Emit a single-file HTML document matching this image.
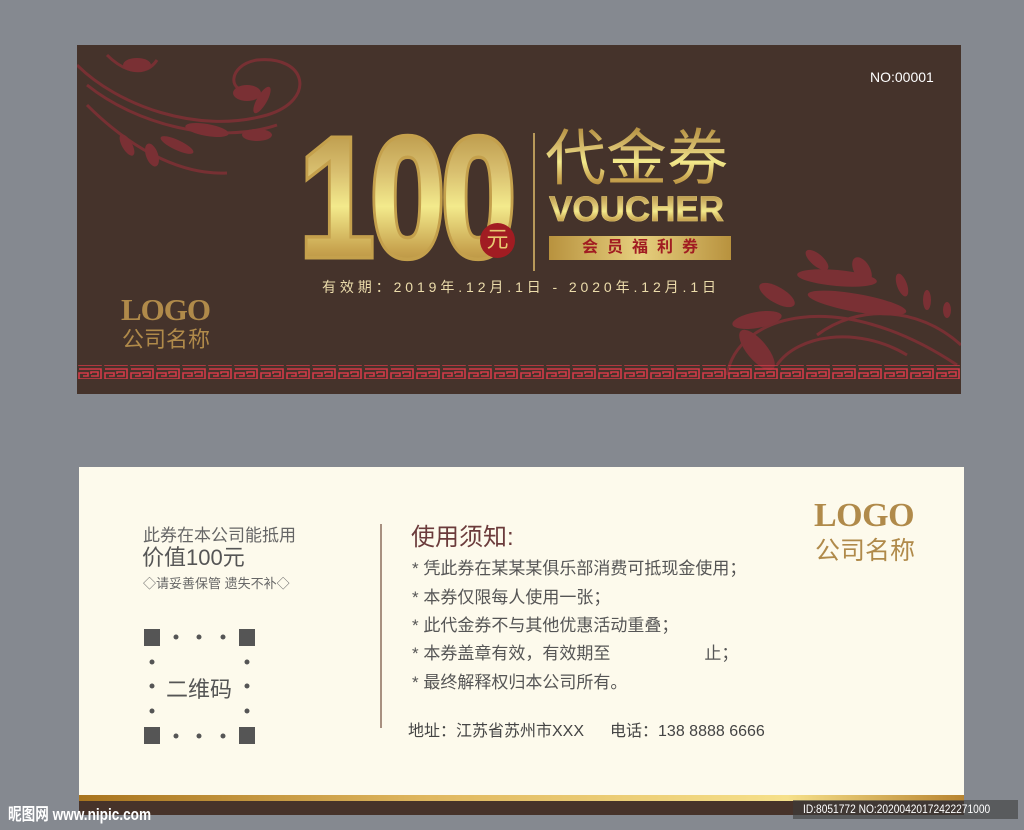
<!DOCTYPE html>
<html><head><meta charset="utf-8"><style>
*{margin:0;padding:0;box-sizing:border-box}
body{width:1024px;height:830px;overflow:hidden;background:#858990;position:relative;font-family:"Liberation Sans","Noto Sans CJK SC",sans-serif}
.abs{position:absolute;white-space:nowrap}
.top{position:absolute;left:77px;top:45px;width:884px;height:349px;background:#45332b;overflow:hidden}
.gold{background:linear-gradient(180deg,#b08a3c 0%,#d9c070 35%,#f3ea8c 55%,#c9a550 80%,#a27a32 100%);-webkit-background-clip:text;background-clip:text;color:transparent}
.bot{position:absolute;left:79px;top:467px;width:885px;height:348px;background:#fdfaec}
.n{font-size:17px;color:#555}
</style></head><body>
<div class="top">
<svg class="abs" style="left:0;top:0" width="884" height="349">
<defs><pattern id="fr" x="0" y="0" width="26" height="14" patternUnits="userSpaceOnUse">
<path d="M2 2H24V12H2V6H11V9H6M14 9H21V5H14V7" fill="none" stroke="#d23a48" stroke-width="1.6"/>
</pattern></defs>
<g fill="none" stroke="#7a3034" stroke-width="3" opacity=".95">
<path d="M0 20C40 60 120 90 190 70C240 55 230 10 180 15C150 20 150 50 175 45"/>
<path d="M10 40C60 80 140 100 200 80"/>
<path d="M30 10C50 30 70 30 80 15"/>
<path d="M10 60C60 110 110 130 150 128"/>
<path d="M650 330C660 270 760 240 880 320"/>
<path d="M700 320C720 290 780 280 830 310"/>
<path d="M740 290C780 260 840 260 884 300"/>
</g>
<g fill="#7a3034">
<ellipse cx="170" cy="48" rx="14" ry="8"/><ellipse cx="60" cy="20" rx="14" ry="7"/>
<ellipse cx="130" cy="85" rx="22" ry="6" transform="rotate(10 130 85)"/>
<ellipse cx="100" cy="100" rx="18" ry="5" transform="rotate(25 100 100)"/>
<ellipse cx="75" cy="110" rx="6" ry="12" transform="rotate(-20 75 110)"/>
<ellipse cx="50" cy="100" rx="5" ry="12" transform="rotate(-30 50 100)"/>
<ellipse cx="180" cy="90" rx="15" ry="6"/><ellipse cx="185" cy="55" rx="5" ry="15" transform="rotate(30 185 55)"/>
<ellipse cx="760" cy="233" rx="40" ry="8" transform="rotate(5 760 233)"/>
<ellipse cx="780" cy="258" rx="50" ry="9" transform="rotate(10 780 258)"/>
<ellipse cx="700" cy="250" rx="20" ry="8" transform="rotate(30 700 250)"/>
<ellipse cx="680" cy="275" rx="25" ry="8" transform="rotate(-10 680 275)"/>
<ellipse cx="740" cy="215" rx="14" ry="6" transform="rotate(40 740 215)"/>
<ellipse cx="785" cy="225" rx="8" ry="14" transform="rotate(-30 785 225)"/>
<ellipse cx="825" cy="240" rx="5" ry="12" transform="rotate(-20 825 240)"/>
<ellipse cx="850" cy="255" rx="4" ry="10"/><ellipse cx="870" cy="265" rx="4" ry="8"/>
<ellipse cx="680" cy="305" rx="10" ry="25" transform="rotate(-40 680 305)"/>
</g>
<rect x="0" y="320" width="884" height="14" fill="url(#fr)"/>
</svg>
<div class="abs" style="left:793px;top:24px;font-size:14px;color:#fff">NO:00001</div>
<div class="abs" style="left:222px;top:68px;font-size:170px;font-weight:900;letter-spacing:-6px;transform:scaleX(0.8);transform-origin:left top;line-height:1;color:#c9a550;-webkit-text-stroke:7px #c4a04c">100</div>
<div class="abs gold" style="left:222px;top:68px;font-size:170px;font-weight:900;letter-spacing:-6px;transform:scaleX(0.8);transform-origin:left top;line-height:1">100</div>
<div class="abs" style="left:403px;top:178px;width:35px;height:35px;border-radius:50%;background:#a11c22;color:#e8c870;font-size:22px;text-align:center;line-height:34px">元</div>
<div class="abs" style="left:456px;top:88px;width:2px;height:138px;background:#b8995a"></div>
<div class="abs gold" style="left:468px;top:80px;font-size:61px;line-height:1.1">代金券</div>
<div class="abs gold" style="left:472px;top:147px;font-size:35px;font-weight:bold;line-height:1;-webkit-text-stroke:0.6px #d9c070">VOUCHER</div>
<div class="abs" style="left:472px;top:191px;width:182px;height:24px;background:linear-gradient(90deg,#b8923e,#e6cf7e,#b8923e);color:#a11c22;font-size:16px;font-weight:bold;text-align:center;line-height:24px;letter-spacing:9px;padding-left:9px">会员福利券</div>
<div class="abs" style="left:245px;top:232px;font-size:14px;color:#ecdcab;letter-spacing:3.9px">有效期：2019年.12月.1日 - 2020年.12月.1日</div>
<div class="abs" style="left:44px;top:247px;font-family:'Liberation Serif',serif;font-weight:bold;font-size:31px;color:#b08a4a;letter-spacing:-1px">LOGO</div>
<div class="abs" style="left:45px;top:277px;font-size:22px;color:#b08a4a">公司名称</div>
</div>

<div class="bot">
<div class="abs" style="left:64px;top:54px;font-size:17px;color:#666">此券在本公司能抵用</div>
<div class="abs" style="left:63px;top:73px;font-size:22px;color:#555">价值100元</div>
<div class="abs" style="left:64px;top:106px;font-size:13px;color:#666">◇请妥善保管 遗失不补◇</div>
<svg class="abs" style="left:60px;top:155px" width="125" height="130">
<g fill="#555"><rect x="5" y="7" width="16" height="17"/><rect x="100" y="7" width="16" height="17"/><rect x="5" y="105" width="16" height="17"/><rect x="100" y="105" width="16" height="17"/>
<circle cx="37" cy="15" r="2.5"/><circle cx="60" cy="15" r="2.5"/><circle cx="84" cy="15" r="2.5"/>
<circle cx="37" cy="114" r="2.5"/><circle cx="60" cy="114" r="2.5"/><circle cx="84" cy="114" r="2.5"/>
<circle cx="13" cy="40" r="2.5"/><circle cx="13" cy="64" r="2.5"/><circle cx="13" cy="89" r="2.5"/>
<circle cx="108" cy="40" r="2.5"/><circle cx="108" cy="64" r="2.5"/><circle cx="108" cy="89" r="2.5"/></g></svg>
<div class="abs" style="left:87px;top:205px;font-size:22px;color:#555">二维码</div>
<div class="abs" style="left:301px;top:57px;width:2px;height:204px;background:#a89080"></div>
<div class="abs" style="left:332px;top:50px;font-size:24px;color:#6b3b3b">使用须知:</div>
<div class="abs n" style="left:333px;top:87px">* 凭此券在某某某俱乐部消费可抵现金使用；</div>
<div class="abs n" style="left:333px;top:116px">* 本券仅限每人使用一张；</div>
<div class="abs n" style="left:333px;top:144px">* 此代金券不与其他优惠活动重叠；</div>
<div class="abs n" style="left:333px;top:172px">* 本券盖章有效，有效期至<span style="display:inline-block;width:94px"></span>止；</div>
<div class="abs n" style="left:333px;top:201px">* 最终解释权归本公司所有。</div>
<div class="abs" style="left:329px;top:250px;font-size:16px;color:#444">地址：江苏省苏州市XXX<span style="display:inline-block;width:26px"></span>电话：138 8888 6666</div>
<div class="abs" style="left:735px;top:30px;font-family:'Liberation Serif',serif;font-weight:bold;font-size:34px;color:#b08a4a;letter-spacing:-0.5px">LOGO</div>
<div class="abs" style="left:736px;top:64px;font-size:25px;color:#b08a4a">公司名称</div>
<div class="abs" style="left:0;top:328px;width:885px;height:6px;background:linear-gradient(90deg,#a8741e,#e0b860 40%,#f6e08a 80%,#b88430)"></div>
<div class="abs" style="left:0;top:334px;width:885px;height:14px;background:#47332a"></div>
</div>
<div class="abs" style="left:8px;top:800px;font-size:17px;font-weight:bold;color:#fff;transform:scaleX(.8);transform-origin:left">昵图网 www.nipic.com</div>
<div class="abs" style="left:793px;top:800px;width:225px;height:19px;background:rgba(60,60,60,.6);color:#fff;font-size:12px;line-height:19px;padding-left:10px"><span style="display:inline-block;transform:scaleX(.85);transform-origin:left">ID:8051772 NO:20200420172422271000</span></div>
</body></html>
